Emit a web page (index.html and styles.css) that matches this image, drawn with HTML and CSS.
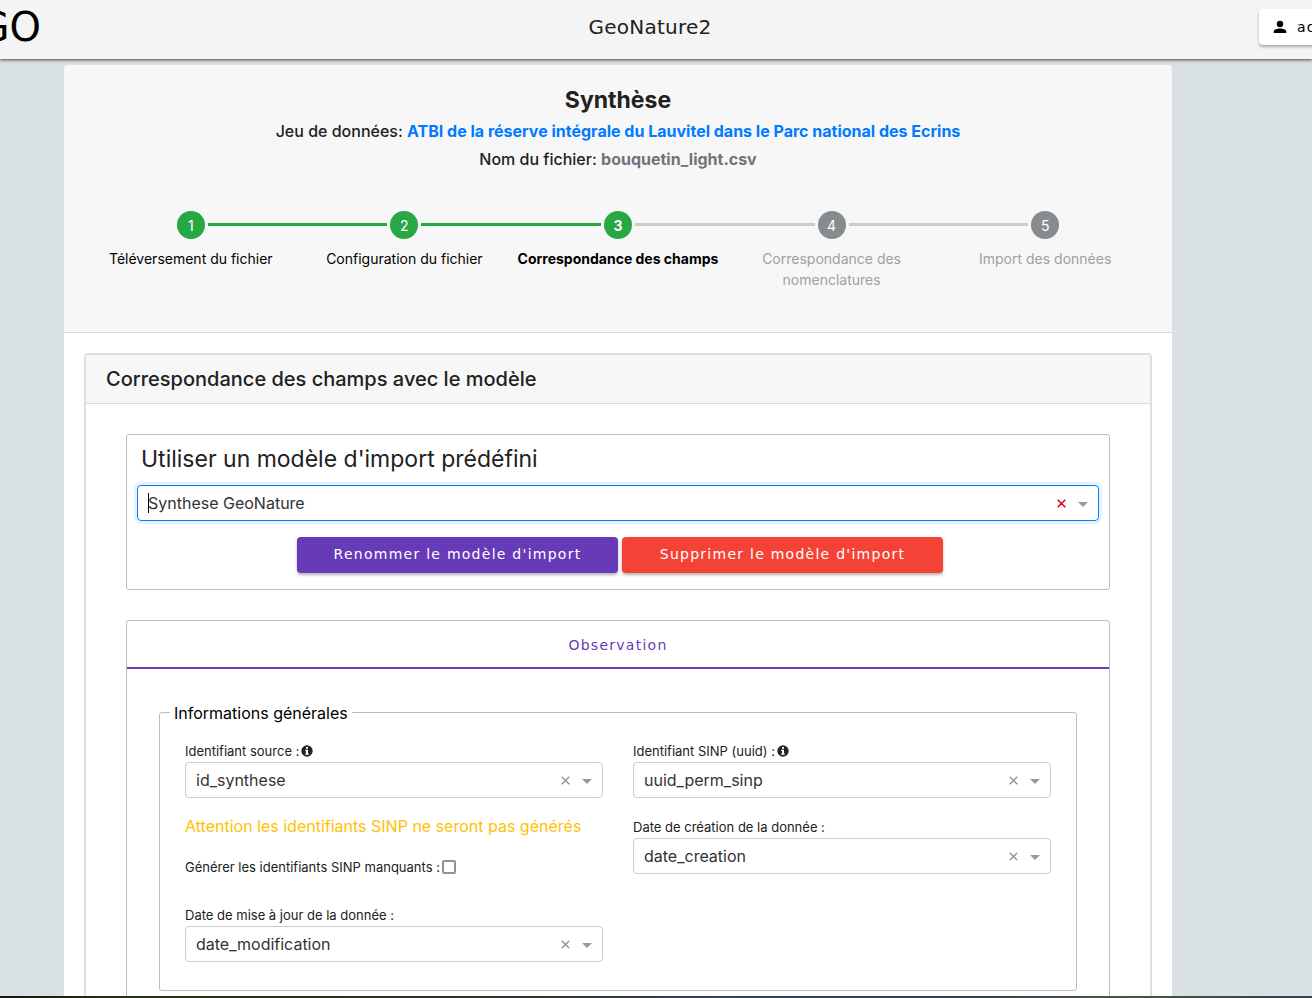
FILE: index.html
```html
<!DOCTYPE html>
<html lang="fr">
<head>
<meta charset="utf-8">
<title>GeoNature2 - Import</title>
<link rel="stylesheet" href="styles.css">
</head>
<body>
<svg class="sprite" aria-hidden="true">
  <symbol id="cross" viewBox="0 0 9 9"><path d="M.7.7l7.600 7.600M8.300.7l-7.600 7.600" fill="none" stroke="currentColor" stroke-width="1.5"/></symbol>
  <symbol id="info" viewBox="0 0 12 12"><circle cx="6" cy="6" r="5.7" fill="#212529"/><path d="M5 2h2v1.7H5zM4.2 4.8H7v3.6h.8V9.800H4.200V8.400H5V6.100h-.8z" fill="#fff"/></symbol>
</svg>
<header class="topbar">
  <div class="logo"><span>GO</span></div>
  <div class="app-name">GeoNature2</div>
  <div class="account">
    <button type="button" class="user-button">
      <svg class="user-icon" viewBox="0 0 14 14" aria-hidden="true"><circle cx="7" cy="4" r="3.200"/><path d="M.7 13v-1.500C.7 9.500 4 8.400 7 8.400s6.300 1.100 6.300 3.100V13z"/></svg>
      <span>admin</span>
    </button>
  </div>
</header>
<main class="page">
  <section class="card">
    <div class="card-head">
      <h1>Synthèse</h1>
      <p>Jeu de données: <a href="#jeu">ATBI de la réserve intégrale du Lauvitel dans le Parc national des Ecrins</a></p>
      <p>Nom du fichier: <b>bouquetin_light.csv</b></p>
      <ol class="stepper">
        <li class="done"><span class="dot">1</span><span class="step-label">Téléversement du fichier</span></li>
        <li class="done"><span class="dot">2</span><span class="step-label">Configuration du fichier</span></li>
        <li class="current"><span class="dot">3</span><span class="step-label">Correspondance des champs</span></li>
        <li><span class="dot">4</span><span class="step-label">Correspondance des nomenclatures</span></li>
        <li><span class="dot">5</span><span class="step-label">Import des données</span></li>
      </ol>
    </div>
    <div class="panel">
      <h2>Correspondance des champs avec le modèle</h2>
      <div class="panel-body">
        <div class="box preset">
          <h3><label for="preset">Utiliser un modèle d'import prédéfini</label></h3>
          <div class="combo active">
            <select id="preset"><option>Synthese GeoNature</option></select>
            <span class="caret"></span>
            <button type="button" class="clear" aria-label="Effacer"><svg><use href="#cross"/></svg></button>
            <span class="arrow"></span>
          </div>
          <div class="actions">
            <button type="button" class="rename">Renommer le modèle d'import</button>
            <button type="button" class="delete">Supprimer le modèle d'import</button>
          </div>
        </div>
        <div class="box tabs">
          <button type="button" class="tab">Observation</button>
          <fieldset>
            <legend>Informations générales</legend>
            <div class="columns">
              <div class="column">
                <div class="field">
                  <label for="source">Identifiant source : <svg class="info"><use href="#info"/></svg></label>
                  <div class="combo">
                    <select id="source"><option>id_synthese</option></select>
                    <button type="button" class="clear" aria-label="Effacer"><svg><use href="#cross"/></svg></button>
                    <span class="arrow"></span>
                  </div>
                </div>
                <p class="warning">Attention les identifiants SINP ne seront pas générés</p>
                <div class="check">
                  <label for="generate">Générer les identifiants SINP manquants :</label>
                  <input type="checkbox" id="generate">
                </div>
                <div class="field">
                  <label for="updated">Date de mise à jour de la donnée :</label>
                  <div class="combo">
                    <select id="updated"><option>date_modification</option></select>
                    <button type="button" class="clear" aria-label="Effacer"><svg><use href="#cross"/></svg></button>
                    <span class="arrow"></span>
                  </div>
                </div>
              </div>
              <div class="column">
                <div class="field">
                  <label for="uuid">Identifiant SINP (uuid) : <svg class="info"><use href="#info"/></svg></label>
                  <div class="combo">
                    <select id="uuid"><option>uuid_perm_sinp</option></select>
                    <button type="button" class="clear" aria-label="Effacer"><svg><use href="#cross"/></svg></button>
                    <span class="arrow"></span>
                  </div>
                </div>
                <div class="field">
                  <label for="created">Date de création de la donnée :</label>
                  <div class="combo">
                    <select id="created"><option>date_creation</option></select>
                    <button type="button" class="clear" aria-label="Effacer"><svg><use href="#cross"/></svg></button>
                    <span class="arrow"></span>
                  </div>
                </div>
              </div>
            </div>
          </fieldset>
        </div>
      </div>
    </div>
  </section>
</main>
<div class="photo-strip"></div>
</body>
</html>
```

FILE: styles.css
```css
* { box-sizing: border-box; }
body {
  margin: 0;
  height: 100vh;
  display: flex;
  flex-direction: column;
  overflow: hidden;
  background: #dae1e4;
  color: #212121;
  font-family: Inter, sans-serif;
  font-size: 16px;
}
h1, h2, h3, p, ol { margin: 0; padding: 0; }
button, select { font: inherit; border: 0; margin: 0; }
.sprite { display: none; }

.topbar {
  flex: none;
  display: grid;
  grid-template-columns: 41px 1fr 53px;
  align-items: center;
  height: 59px;
  padding-bottom: 5px;
  background: #f4f4f4;
  color: #000;
  font-family: "DejaVu Sans", sans-serif;
  box-shadow: 0 1px 3px rgba(0, 0, 0, .7);
  z-index: 1;
}
.logo {
  display: flex;
  justify-content: flex-end;
  overflow: hidden;
  font-size: 40px;
  line-height: 50px;
}
.app-name { text-align: center; font-size: 20px; line-height: 24px; letter-spacing: .0125em; color: #212121; }
.account { overflow: hidden; padding: 6px 0 6px 6px; margin-left: -6px; }
.user-button {
  display: flex;
  align-items: center;
  gap: 10px;
  height: 36px;
  padding: 0 14px;
  border-radius: 4px;
  background: #fff;
  color: #000;
  letter-spacing: .09em;
  font-size: 14px;
  box-shadow: 0 2px 3px rgba(0, 0, 0, .3);
}
.user-icon { flex: none; width: 14px; height: 14px; }

.page { flex: 1; min-height: 0; overflow: hidden; padding: 6px 140px 0 64px; }
.card { min-height: 100%; border-radius: 4px 4px 0 0; background: #fff; overflow: hidden; }
.card-head {
  padding: 20px 20px 42px;
  background: #f7f7f7;
  border-bottom: 1px solid #d9d9d9;
  text-align: center;
}
h1 { font-size: 23px; line-height: 30px; font-weight: 700; }
.card-head p { margin-top: 8px; line-height: 20px; font-weight: 500; }
.card-head h1 + p { margin-top: 6px; }
.card-head a { color: #007bff; font-weight: 700; text-decoration: none; }
.card-head b { color: #6c757d; font-weight: 700; }

.stepper { display: flex; margin-top: 42px; list-style: none; font-size: 14px; line-height: 21px; }
.stepper li {
  position: relative;
  flex: 1 1 0;
  display: flex;
  flex-direction: column;
  align-items: center;
  gap: 9px;
  min-height: 70px;
  color: #a0a0a0;
}
.stepper li + li::before {
  content: "";
  position: absolute;
  top: 12px;
  left: calc(-50% + 17px);
  right: calc(50% + 17px);
  height: 3px;
  background: #ccc;
}
.stepper .done, .stepper .current { color: #000; }
.stepper .done + li::before { background: #28a745; }
.stepper .current { font-weight: 700; }
.dot { width: 28px; height: 28px; line-height: 30px; border-radius: 50%; background: #868b8e; color: #fff; }
.done .dot, .current .dot { background: #28a745; }
.step-label { padding: 0 20px; }
.current .step-label { padding: 0; }

.panel { margin: 20px 20px 0; min-height: 700px; border: 2px solid #dfdfdf; border-radius: 4px; }
h2 {
  padding: 12px 20px;
  background: #f7f7f7;
  border-bottom: 1px solid #d9d9d9;
  font-size: 20px;
  line-height: 24px;
  font-weight: 500;
}
.panel-body { display: flex; flex-direction: column; gap: 30px; padding: 30px 40px; }
.box { border: 1px solid #bdbdbd; border-radius: 3px; }
.preset { padding: 10px 10px 16px; }
h3 {
  padding: 0 4px;
  margin-bottom: 12px;
  font-size: 23px;
  line-height: 28px;
  font-weight: 400;
}

.combo {
  position: relative;
  height: 36px;
  display: flex;
  align-items: center;
  border: 1px solid #ccc;
  border-radius: 4px;
}
.combo select {
  flex: 1;
  min-width: 0;
  height: 100%;
  padding: 0 10px;
  appearance: none;
  background: none;
  color: #333;
  outline: 0;
}
.clear { width: 17px; height: 17px; padding: 4px; background: none; color: #999; }
.clear svg { display: block; width: 9px; height: 9px; }
.arrow { margin: 2px 10px 0 8px; border: 5px solid transparent; border-top-color: #999; border-bottom-width: 0; }
.combo.active { border-color: #007eff; box-shadow: 0 0 0 3px rgba(0, 126, 255, .1); }
.active .clear { color: #d0021b; }
.caret { position: absolute; left: 10px; width: 1px; height: 20px; background: #000; }

.actions { display: flex; justify-content: center; gap: 4px; margin-top: 16px; padding-left: 4px; }
.actions button {
  flex: 0 1 321px;
  height: 36px;
  padding-bottom: 3px;
  border-radius: 4px;
  color: #fff;
  font-family: "DejaVu Sans", sans-serif;
  font-size: 14px;
  letter-spacing: .09em;
  box-shadow: 0 2px 3px rgba(0, 0, 0, .3);
}
.rename { background: #673ab7; }
.delete { background: #f44336; }

.tab {
  display: block;
  width: 100%;
  height: 48px;
  padding: 2px 0 0;
  border-bottom: 2px solid #673ab7;
  background: none;
  color: #673ab7;
  font-family: "DejaVu Sans", sans-serif;
  font-size: 14px;
  letter-spacing: .09em;
}
fieldset { min-width: 0; margin: 32px; padding: 0 10px 28px; border: 1px solid #bdbdbd; border-radius: 3px; }
legend { padding: 2px 4px 0; line-height: 21px; color: #000; }
.columns { display: grid; grid-template-columns: 1fr 1fr; gap: 30px; padding: 16px 15px 0; }
.column { display: flex; flex-direction: column; gap: 18px; }
.field label, .check { display: flex; align-items: center; gap: 2px; font-size: 13px; line-height: 22px; }
.check + .field { margin-top: 8px; }
.info { width: 12px; height: 12px; }
.warning { color: #ffc107; line-height: 20px; padding-bottom: 2px; }
.check input {
  appearance: none;
  width: 14px;
  height: 14px;
  margin: 0;
  border: 2px solid #8f8f9d;
  border-radius: 2px;
  background: #fff;
}

.photo-strip { flex: none; height: 2px; background: linear-gradient(90deg, #16180f, #283012 10%, #33322a 40%, #35435a 55%, #34424c 75%, #4b5248 85%, #37424a); }
```
